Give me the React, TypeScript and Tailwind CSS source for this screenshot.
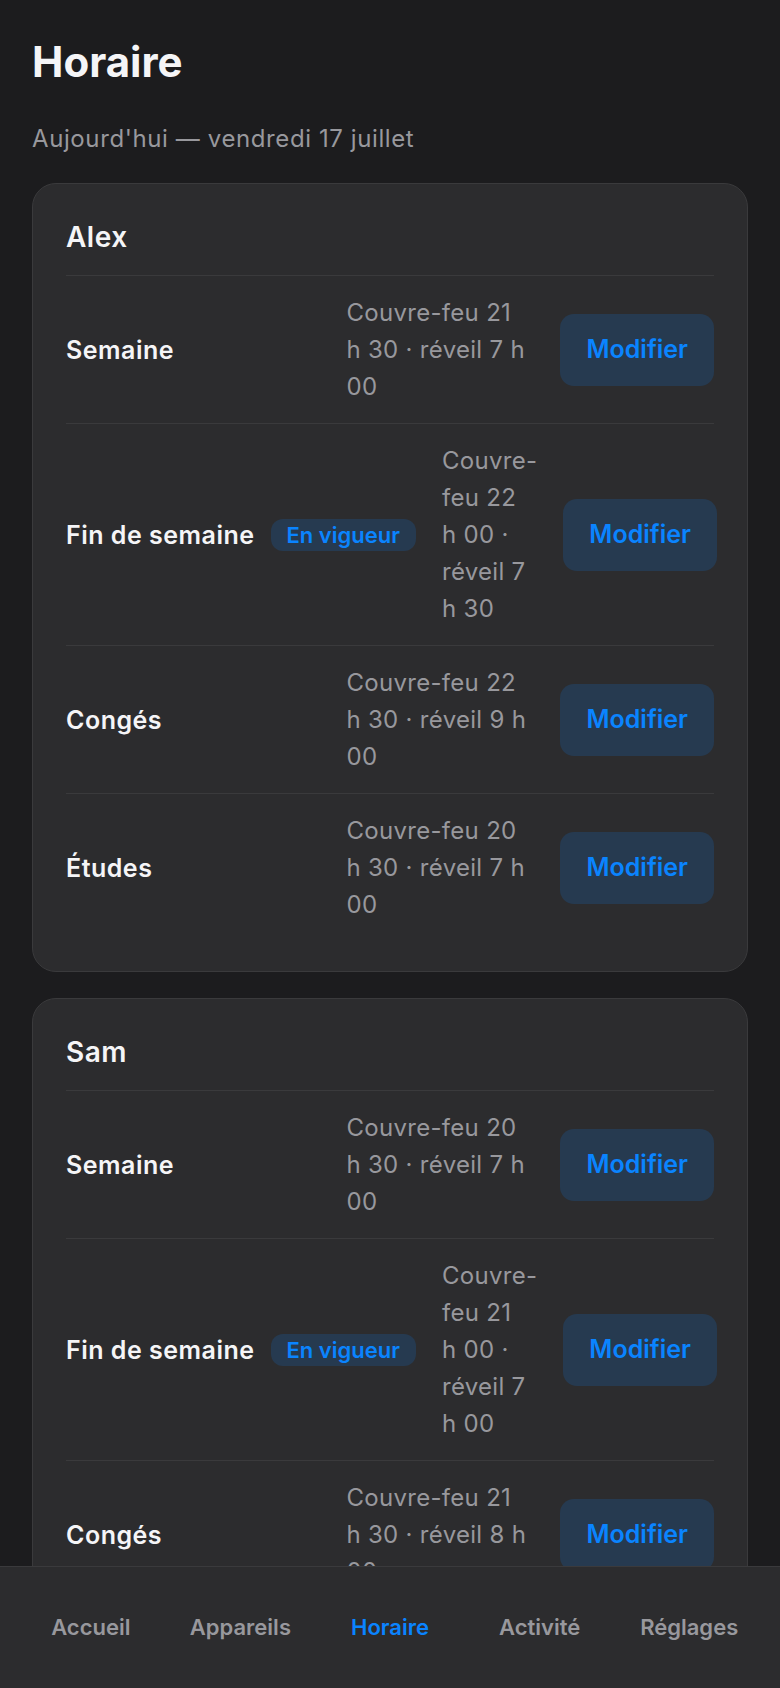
import React from "react";

type Row = { label: string; lines: string[]; active?: boolean };
type Child = { name: string; rows: Row[] };

const data: Child[] = [
  {
    name: "Alex",
    rows: [
      { label: "Semaine", lines: ["Couvre-feu 21", "h 30 · réveil 7 h", "00"] },
      {
        label: "Fin de semaine",
        lines: ["Couvre-", "feu 22", "h 00 ·", "réveil 7", "h 30"],
        active: true,
      },
      { label: "Congés", lines: ["Couvre-feu 22", "h 30 · réveil 9 h", "00"] },
      { label: "Études", lines: ["Couvre-feu 20", "h 30 · réveil 7 h", "00"] },
    ],
  },
  {
    name: "Sam",
    rows: [
      { label: "Semaine", lines: ["Couvre-feu 20", "h 30 · réveil 7 h", "00"] },
      {
        label: "Fin de semaine",
        lines: ["Couvre-", "feu 21", "h 00 ·", "réveil 7", "h 00"],
        active: true,
      },
      { label: "Congés", lines: ["Couvre-feu 21", "h 30 · réveil 8 h", "00"] },
      { label: "Études", lines: ["Couvre-feu 20", "h 00 · réveil 6 h", "45"] },
    ],
  },
];

const tabs = ["Accueil", "Appareils", "Horaire", "Activité", "Réglages"];

function ScheduleRow({ row }: { row: Row }) {
  return (
    <div className="flex items-center gap-[26px] border-t border-[#3a3a3c] py-[18px]">
      <div className="flex flex-1 items-center gap-4">
        <span className="whitespace-nowrap text-[25px] font-semibold leading-[32px] tracking-[0.5px] text-[#f5f5f7]">
          {row.label}
        </span>
        {row.active && (
          <span className="whitespace-nowrap rounded-[12px] bg-[#263a50] px-[16px] text-[22px] font-semibold leading-[32px] text-[#0a84ff]">
            En vigueur
          </span>
        )}
      </div>
      <div className="w-[188px] text-[24px] leading-[37px] tracking-[0.3px] text-[#98989d]">
        {row.lines.map((l, i) => (
          <span key={i} className="block whitespace-nowrap">
            {l}
          </span>
        ))}
      </div>
      <button className="h-[72px] shrink-0 rounded-[14px] bg-[#263a50] px-[26px] text-[25px] font-semibold text-[#0a84ff]">
        Modifier
      </button>
    </div>
  );
}

export default function App() {
  return (
    <div
      className="min-h-screen bg-[#1c1c1e]"
      style={{ fontFamily: "Inter, 'Noto Sans', sans-serif" }}
    >
      <div className="px-8 pt-[37px] pb-[160px]">
        <h1 className="text-[42px] font-bold leading-[50px] text-[#f5f5f7]">Horaire</h1>
        <p className="mt-[36px] text-[24px] leading-[32px] tracking-[0.6px] text-[#98989d]">
          Aujourd'hui — vendredi 17 juillet
        </p>
        <div className="mt-[28px] flex flex-col gap-[26px]">
          {data.map((c) => (
            <div
              key={c.name}
              className="rounded-[24px] border border-[#3a3a3c] bg-[#2c2c2e] px-[33px] pt-[36px] pb-[30px]"
            >
              <h2 className="pb-[21px] text-[28px] font-semibold leading-[34px] tracking-[0.5px] text-[#f5f5f7]">
                {c.name}
              </h2>
              <div>
                {c.rows.map((r) => (
                  <ScheduleRow key={r.label} row={r} />
                ))}
              </div>
            </div>
          ))}
        </div>
      </div>
      <nav className="fixed inset-x-0 bottom-0 grid h-[122px] grid-cols-5 items-center border-t border-[#3a3a3c] bg-[#2c2c2e] px-4">
        {tabs.map((t) => (
          <div
            key={t}
            className={
              t === "Horaire"
                ? "text-center text-[22px] font-semibold text-[#0a84ff]"
                : "text-center text-[22px] font-semibold text-[#98989d]"
            }
          >
            {t}
          </div>
        ))}
      </nav>
    </div>
  );
}
